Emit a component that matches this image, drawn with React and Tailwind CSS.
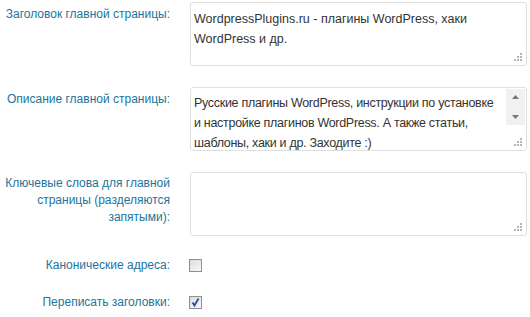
import React from "react";

const Grip = () => (
  <svg width="8" height="8" viewBox="0 0 8 8" className="absolute right-[4px] bottom-[4px]">
    <rect x="6" y="0" width="2" height="2" fill="#b5b5b5" />
    <rect x="3" y="3" width="2" height="2" fill="#b5b5b5" />
    <rect x="6" y="3" width="2" height="2" fill="#b5b5b5" />
    <rect x="0" y="6" width="2" height="2" fill="#b5b5b5" />
    <rect x="3" y="6" width="2" height="2" fill="#b5b5b5" />
    <rect x="6" y="6" width="2" height="2" fill="#b5b5b5" />
  </svg>
);

const Box = ({ children, scroll }) => (
  <div className="relative w-[337px] h-[64px] overflow-hidden border border-[#dfdfdf] rounded-[3px] bg-white pl-[3px] pt-[6px] pr-[20px] text-[12.5px] leading-[20px] text-[#333] whitespace-nowrap">
    {children}
    {scroll && (
      <div className="absolute right-[1px] top-[1px] w-[19px] h-[36px] bg-[#f1f1f1] flex flex-col justify-between items-center py-[6px]">
        <svg width="7" height="4" viewBox="0 0 7 4"><path d="M0 4 L3.5 0 L7 4 Z" fill="#777" /></svg>
        <svg width="7" height="4" viewBox="0 0 7 4"><path d="M0 0 L3.5 4 L7 0 Z" fill="#777" /></svg>
      </div>
    )}
    <Grip />
  </div>
);

const Check = ({ checked }) => (
  <div className="w-[13px] h-[13px] border border-[#8f8f8f] bg-gradient-to-br from-[#dcdcdc] to-[#f8f8f8] relative">
    {checked && (
      <svg width="11" height="11" viewBox="0 0 11 11" className="absolute left-0 top-0">
        <path d="M2.5 5.5 L4.5 8.5 L8.5 1.5" stroke="#2a4ea0" strokeWidth="1.8" fill="none" />
      </svg>
    )}
  </div>
);

const Label = ({ children, className = "" }) => (
  <div className={"w-[170px] shrink-0 text-right text-[12px] leading-[17px] text-[#21759b] " + className}>{children}</div>
);

export default function App() {
  return (
    <div className="w-[530px] h-[317px] bg-white pt-[2px]" style={{ fontFamily: "'Liberation Sans', Arial, sans-serif" }}>
      <div className="flex gap-[20px]">
        <Label className="pt-[4px]">Заголовок главной страницы:</Label>
        <Box>WordpressPlugins.ru - плагины WordPress, хаки<br />WordPress и др.</Box>
      </div>
      <div className="flex gap-[20px] mt-[21px]">
        <Label className="pt-[4px]">Описание главной страницы:</Label>
        <Box scroll>
          <div className="-mt-[1px] tracking-[-0.3px]">
            Русские плагины WordPress, инструкции по установке<br />
            и настройке плагинов WordPress. А также статьи,<br />
            шаблоны, хаки и др. Заходите :)
          </div>
        </Box>
      </div>
      <div className="flex gap-[20px] mt-[21px]">
        <Label className="pt-[3px]">Ключевые слова для главной<br />страницы (разделяются<br />запятыми):</Label>
        <Box />
      </div>
      <div className="flex gap-[19px] items-center mt-[23px] h-[13px]">
        <Label>Канонические адреса:</Label>
        <Check />
      </div>
      <div className="flex gap-[19px] items-center mt-[24px] h-[13px]">
        <Label>Переписать заголовки:</Label>
        <Check checked />
      </div>
    </div>
  );
}
